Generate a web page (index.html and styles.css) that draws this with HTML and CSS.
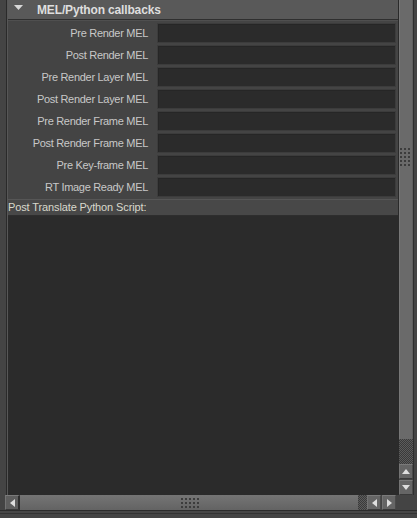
FILE: index.html
```html
<!DOCTYPE html>
<html>
<head>
<meta charset="utf-8">
<link rel="stylesheet" href="styles.css">
</head>
<body>
<div class="window">
  <div class="body">
    <div class="main">
      <div class="header">
        <svg class="caret" width="9" height="6" viewBox="0 0 9 6"><polygon points="0,0 9,0 4.5,5" fill="#d8d8d8"/></svg>
        <span class="title">MEL/Python callbacks</span>
      </div>
      <div class="rows">
        <div class="row"><span class="label">Pre Render MEL</span><div class="field"></div></div>
        <div class="row"><span class="label">Post Render MEL</span><div class="field"></div></div>
        <div class="row"><span class="label">Pre Render Layer MEL</span><div class="field"></div></div>
        <div class="row"><span class="label">Post Render Layer MEL</span><div class="field"></div></div>
        <div class="row"><span class="label">Pre Render Frame MEL</span><div class="field"></div></div>
        <div class="row"><span class="label">Post Render Frame MEL</span><div class="field"></div></div>
        <div class="row"><span class="label">Pre Key-frame MEL</span><div class="field"></div></div>
        <div class="row"><span class="label">RT Image Ready MEL</span><div class="field"></div></div>
      </div>
      <div class="pybar">Post Translate Python Script:</div>
      <div class="script"></div>
    </div>
    <div class="vscroll">
      <div class="vthumb"><div class="grip vgrip"></div></div>
      <div class="checker vcheck"></div>
      <div class="sbtn vbtn"><svg width="8" height="5" viewBox="0 0 8 5"><polygon points="0,5 8,5 4,0" fill="#dedede"/></svg></div>
      <div class="sbtn vbtn"><svg width="8" height="5" viewBox="0 0 8 5"><polygon points="0,0 8,0 4,5" fill="#dedede"/></svg></div>
    </div>
  </div>
  <div class="hscroll">
    <div class="sbtn hbtn first"><svg width="5" height="8" viewBox="0 0 5 8"><polygon points="5,0 5,8 0,4" fill="#dedede"/></svg></div>
    <div class="hthumb"><div class="grip hgrip"></div></div>
    <div class="checker hcheck"></div>
    <div class="sbtn hbtn"><svg width="5" height="8" viewBox="0 0 5 8"><polygon points="5,0 5,8 0,4" fill="#dedede"/></svg></div>
    <div class="sbtn hbtn"><svg width="5" height="8" viewBox="0 0 5 8"><polygon points="0,0 0,8 5,4" fill="#dedede"/></svg></div>
  </div>
  <div class="footer"></div>
</div>
</body>
</html>
```

FILE: styles.css
```css
* { box-sizing: border-box; }
html, body { margin: 0; padding: 0; }
body {
  background: #444444;
  font-family: "Liberation Sans", Arial, sans-serif;
  font-size: 11px;
  color: #c8c8c8;
  width: 417px;
  height: 518px;
  overflow: hidden;
}
.window { width: 417px; height: 518px; display: flex; flex-direction: column; }
.body { display: flex; height: 495px; padding-left: 6px; }
.main {
  width: 392px;
  display: flex;
  flex-direction: column;
  border-left: 1px solid #2a2a2a;
  padding-left: 1px;
  box-shadow: inset 1px 0 #575757;
  background: #444444;
}
.header {
  height: 20px;
  background: #595959;
  border-bottom: 1px solid #2f2f2f;
  display: flex;
  align-items: center;
  padding-left: 6px;
}
.caret { display: block; margin-top: -3px; }
.title {
  margin-left: 14px;
  font-weight: bold;
  font-size: 12px;
  letter-spacing: -0.15px;
  color: #dedede;
}
.rows {
  border-top: 1px solid #4f4f4f;
  padding-top: 1px;
  padding-bottom: 1px;
  display: flex;
  flex-direction: column;
}
.row { height: 22px; display: flex; align-items: center; }
.label {
  width: 140px;
  text-align: right;
  white-space: nowrap;
  letter-spacing: -0.3px;
  color: #c8c8c8;
}
.field {
  margin-left: 9px;
  width: 239px;
  height: 20px;
  background: #2b2b2b;
  border: 1px solid #3c3c3c;
  box-shadow: inset 1px 1px #262626;
}
.pybar {
  height: 17px;
  border-top: 1px solid #565656;
  border-bottom: 1px solid #2e2e2e;
  background: #484848;
  line-height: 15px;
  letter-spacing: -0.12px;
  color: #d8d8cc;
}
.script { flex: 1; background: #2b2b2b; }
.vscroll {
  width: 16px;
  border-left: 1px solid #2a2a2a;
  border-right: 1px solid #2e2e2e;
  margin-right: 3px;
  display: flex;
  flex-direction: column;
}
.vthumb {
  height: 439px;
  background: #6a6a6a;
  box-shadow: inset 1px 0 #777, inset -1px 0 #5e5e5e;
  display: flex;
  justify-content: center;
  padding-top: 148px;
}
.grip {
  background-image: conic-gradient(from 90deg at 2px 2px, transparent 0 50%, #3c3c3c 0 75%, transparent 0);
  background-size: 4px 4px;
}
.vgrip { width: 12px; height: 18px; }
.checker {
  background-image: conic-gradient(#3a3a3a 25%, #5c5c5c 0 50%, #3a3a3a 0 75%, #5c5c5c 0);
  background-size: 2px 2px;
}
.vcheck { height: 25px; }
.sbtn {
  background: #656565;
  border-top: 1px solid #7a7a7a;
  border-left: 1px solid #747474;
  border-bottom: 1px solid #3a3a3a;
  border-right: 1px solid #4a4a4a;
  display: flex;
  align-items: center;
  justify-content: center;
}
.sbtn svg { display: block; }
.vbtn { height: 15px; }
.vbtn + .vbtn { margin-top: 1px; }
.hscroll {
  height: 15px;
  display: flex;
  padding-left: 5px;
}
.hbtn { width: 14px; height: 15px; }
.hbtn.first { border-right: 2px solid #2e2e2e; width: 15px; background: #5e5e5e; }
.hbtn + .hbtn { margin-left: 1px; }
.hthumb {
  width: 338px;
  background: linear-gradient(#757575, #636363);
  display: flex;
  padding-left: 161px;
  padding-top: 3px;
}
.hgrip { width: 20px; height: 11px; }
.hcheck { width: 9px; }
.footer {
  flex: 1;
  border-top: 1px solid #2b2b2b;
  background: linear-gradient(#464646 0 2px, #333 2px 3px, #444 3px);
}
```
